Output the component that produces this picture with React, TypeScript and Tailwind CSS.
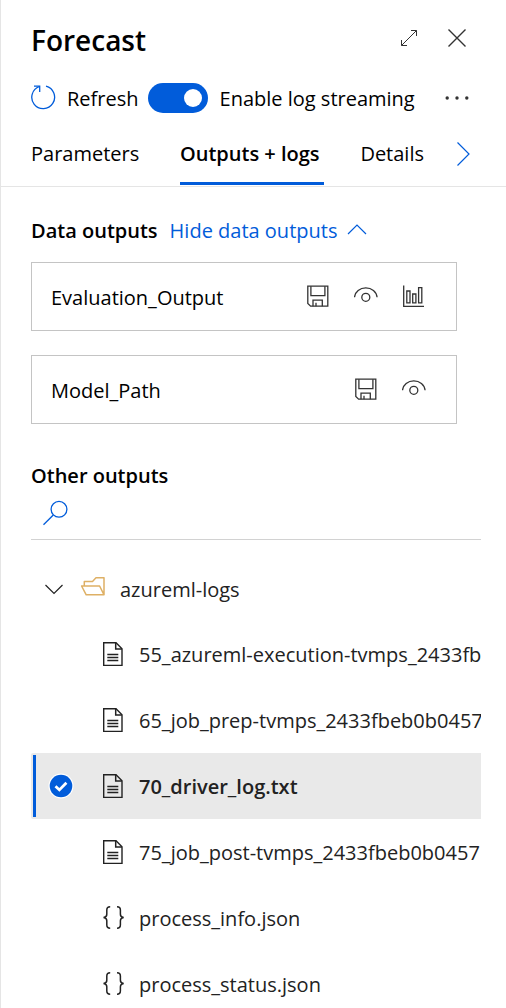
import { useState } from "react";
import type { ReactNode } from "react";

type IconProps = { className?: string };

function Svg({ size, className = "", children }: { size: number; className?: string; children: ReactNode }) {
  return (
    <svg
      aria-hidden="true"
      width={size}
      height={size}
      viewBox={`0 0 ${size} ${size}`}
      fill="none"
      stroke="currentColor"
      strokeWidth="1.3"
      className={`shrink-0 ${className}`}
    >
      {children}
    </svg>
  );
}

const RefreshIcon = ({ className }: IconProps) => (
  <Svg size={26} className={className}>
    <path d="M15 1.200A11.400 11.400 0 1 1 8.400 1.500" />
    <path d="M3 1.200H8.700V7" />
  </Svg>
);

const ExpandIcon = () => (
  <Svg size={18}>
    <path d="M1.500 16.500 16.500 1.500M11 1.500h5.500V7M1.500 11v5.500H7" strokeWidth="1" />
  </Svg>
);

const CloseIcon = () => (
  <Svg size={18}>
    <path d="m.5.5 17 17M17.500.5l-17 17" strokeWidth="1.400" />
  </Svg>
);

const MoreIcon = () => (
  <Svg size={26}>
    <g fill="currentColor" stroke="none">
      <circle cx="3.200" cy="13" r="1.700" />
      <circle cx="13" cy="13" r="1.700" />
      <circle cx="22.800" cy="13" r="1.700" />
    </g>
  </Svg>
);

const SaveIcon = () => (
  <Svg size={24}>
    <path d="M1.800 1.200h20v20H4.600l-2.800-2.700z" />
    <path d="M4.900 1.200v9.500h14V1.200M7 21.200v-6h9.300v6M10 21.200v-3.500" />
  </Svg>
);

const EyeIcon = () => (
  <Svg size={24}>
    <path d="M.5 12.300C1 6.800 6 2.900 11.800 2.900s10.800 3.900 11.300 9.400" />
    <circle cx="11.800" cy="12.300" r="4" />
  </Svg>
);

const ChartIcon = () => (
  <Svg size={24}>
    <path d="M1.700 .5v20.800H22" />
    <path d="M4.800 6h3.200v11.800H4.800zM10.700 9h3.200v8.800h-3.200zM16.600 2.700h3.200v15.100h-3.200z" />
  </Svg>
);

const SearchIcon = () => (
  <Svg size={26}>
    <circle cx="16" cy="9.300" r="7.900" />
    <path d="M10.300 15 .5 24.800" />
  </Svg>
);

const FolderIcon = () => (
  <Svg size={26}>
    <path
      d="M4.300 10V5.500h8.200l3.500-3.700h8v17H6.200L1.600 10h18l4.200 8.300"
      strokeWidth="1.500"
      strokeLinejoin="round"
    />
  </Svg>
);

const DocumentIcon = () => (
  <Svg size={26}>
    <path d="M3.700 1.700h12.300l6 6v16.700H3.700z" strokeWidth="1.400" />
    <path d="M15.700 1.700v6.200h6.200M7.300 13.500h11M7.300 16.500h11M7.300 19.500h11" strokeWidth="1.500" />
  </Svg>
);

const JsonIcon = () => (
  <Svg size={26}>
    <g strokeWidth="1.500">
      <path d="M10.200 1.800C7.700 1.800 6.800 2.900 6.800 5v4.200c0 2-1 3.100-3.300 3.300 2.300.2 3.300 1.300 3.300 3.300v4.200c0 2.200.9 3.200 3.400 3.200" />
      <path d="M17 1.800c2.500 0 3.400 1.100 3.400 3.200v4.200c0 2 1 3.100 3.300 3.300-2.300.2-3.300 1.300-3.300 3.300v4.200c0 2.200-.9 3.200-3.400 3.200" />
    </g>
  </Svg>
);

const CheckBadge = () => (
  <Svg size={26}>
    <circle cx="13" cy="13" r="12.500" fill="#fff" stroke="none" />
    <circle cx="13" cy="13" r="11.300" fill="#015cda" stroke="none" />
    <path d="m7.500 13.200 3.900 3.700 7-7.200" stroke="#fff" strokeWidth="2.800" />
  </Svg>
);

function Chevron({ direction }: { direction: "up" | "down" | "right" }) {
  const paths = {
    up: "m1 13 9-9 9 9",
    down: "m1.500 6 8.500 8.500L18.500 6",
    right: "m4.500-1.500 11.500 11.500L4.500 21.500",
  };
  return (
    <Svg size={20} className="overflow-visible">
      <path d={paths[direction]} strokeWidth="1.200" />
    </Svg>
  );
}

const outputs = [
  { name: "Evaluation_Output", chart: true },
  { name: "Model_Path", chart: false },
];

const files = [
  { name: "55_azureml-execution-tvmps_2433fb", json: false },
  { name: "65_job_prep-tvmps_2433fbeb0b0457", json: false },
  { name: "70_driver_log.txt", json: false },
  { name: "75_job_post-tvmps_2433fbeb0b0457", json: false },
  { name: "process_info.json", json: true },
  { name: "process_status.json", json: true },
];

const tabs = ["Parameters", "Outputs + logs", "Details"];

export default function App() {
  const [streaming, setStreaming] = useState(true);
  const [tab, setTab] = useState("Outputs + logs");
  const [showOutputs, setShowOutputs] = useState(true);
  const [open, setOpen] = useState(true);
  const [selected, setSelected] = useState("70_driver_log.txt");

  return (
    <main className="flex h-screen flex-col overflow-hidden border-l border-[#e5e5e5] bg-white font-['Open_Sans','Noto_Sans',sans-serif] text-[20px] leading-7 text-black">
      <header className="border-b border-[#e5e5e5] pb-px pl-[30px]">
        <div className="flex items-center justify-between pt-5 pr-10">
          <h1 className="text-[28px] leading-10 font-semibold">Forecast</h1>
          <div className="flex items-center gap-[30px] pb-1 text-[#333]">
            <button aria-label="Expand panel"><ExpandIcon /></button>
            <button aria-label="Close panel"><CloseIcon /></button>
          </div>
        </div>

        <div className="flex items-center pt-[23px] pr-9 whitespace-nowrap">
          <button className="flex items-center gap-[10px]">
            <RefreshIcon className="text-[#015cda]" />
            <span className="pt-[2px]">Refresh</span>
          </button>
          <label className="ml-[9px] flex items-center gap-3">
            <input
              type="checkbox"
              role="switch"
              checked={streaming}
              onChange={(e) => setStreaming(e.target.checked)}
              className="peer sr-only"
            />
            <span className="flex h-[30px] w-[60px] shrink-0 items-center rounded-full bg-[#8a8886] px-[6px] peer-checked:justify-end peer-checked:bg-[#015cda]">
              <span className="size-[18px] rounded-full bg-white" />
            </span>
            <span className="pt-[2px]">Enable log streaming</span>
          </label>
          <button aria-label="More actions" className="ml-auto text-[#333]"><MoreIcon /></button>
        </div>

        <div className="flex items-start justify-between pt-[27px] pr-[33px] whitespace-nowrap">
          <div role="tablist" className="flex grow justify-between pr-[25px]">
            {tabs.map((name) => (
              <button
                key={name}
                role="tab"
                aria-selected={tab === name}
                onClick={() => setTab(name)}
                className={`border-b-3 pr-1 pb-[14px] ${tab === name ? "border-[#015cda] font-semibold" : "border-transparent"}`}
              >
                {name}
              </button>
            ))}
          </div>
          <button aria-label="Next tab" className="pt-1 text-[#015cda]"><Chevron direction="right" /></button>
        </div>
      </header>

      <section className="pt-[30px] pr-[49px] pl-[30px]">
        <div className="flex items-center gap-3 whitespace-nowrap">
          <h2 className="font-semibold">Data outputs</h2>
          <button
            aria-expanded={showOutputs}
            onClick={() => setShowOutputs(!showOutputs)}
            className="flex items-center gap-[10px] text-[#015cda]"
          >
            Hide data outputs
            <Chevron direction={showOutputs ? "up" : "down"} />
          </button>
        </div>
        {showOutputs && (
          <ul className="flex flex-col gap-6 pt-[17px]">
            {outputs.map((output) => (
              <li
                key={output.name}
                className="flex h-[69px] items-center justify-between border border-[#c4c4c4] pr-[30px] pl-[19px]"
              >
                <span className="pt-[2px]">{output.name}</span>
                <div className="flex gap-6 text-[#333]">
                  <button aria-label={`Save ${output.name}`}><SaveIcon /></button>
                  <button aria-label={`View ${output.name}`}><EyeIcon /></button>
                  {output.chart && <button aria-label={`Chart ${output.name}`}><ChartIcon /></button>}
                </div>
              </li>
            ))}
          </ul>
        )}
      </section>

      <section className="flex min-h-0 grow flex-col pt-[38px] pr-[25px] pl-[30px]">
        <h2 className="font-semibold">Other outputs</h2>
        <label className="flex h-[50px] shrink-0 items-center gap-3 border-b border-[#d2d2d2] pb-1 pl-3 text-[#015cda]">
          <SearchIcon />
          <input type="search" aria-label="Search outputs" className="min-w-0 grow text-black outline-none" />
        </label>
        <div className="min-h-0 grow overflow-hidden pt-[15px] text-[#222]">
          <button
            aria-expanded={open}
            onClick={() => setOpen(!open)}
            className="flex h-[66px] w-full items-center pt-[2px] pl-[13px]"
          >
            <Chevron direction="down" />
            <span className="mr-[14px] ml-4 text-[#deb065]"><FolderIcon /></span>
            <span className="pt-[2px]">azureml-logs</span>
          </button>
          {open && (
            <ul>
              {files.map((file) => {
                const active = selected === file.name;
                return (
                  <li key={file.name}>
                    <button
                      aria-pressed={active}
                      onClick={() => setSelected(file.name)}
                      className={`flex h-[66px] w-full items-center rounded-l-xs pl-[2px] whitespace-nowrap ${active ? "bg-[#e9e9e9] font-semibold" : ""}`}
                    >
                      <span className={`h-[62px] w-[3px] shrink-0 ${active ? "bg-[#015cda]" : ""}`} />
                      <span className="ml-3 w-[52px] shrink-0">{active && <CheckBadge />}</span>
                      {file.json ? <JsonIcon /> : <DocumentIcon />}
                      <span className="ml-[13px] pt-[2px]">{file.name}</span>
                    </button>
                  </li>
                );
              })}
            </ul>
          )}
        </div>
      </section>
    </main>
  );
}
